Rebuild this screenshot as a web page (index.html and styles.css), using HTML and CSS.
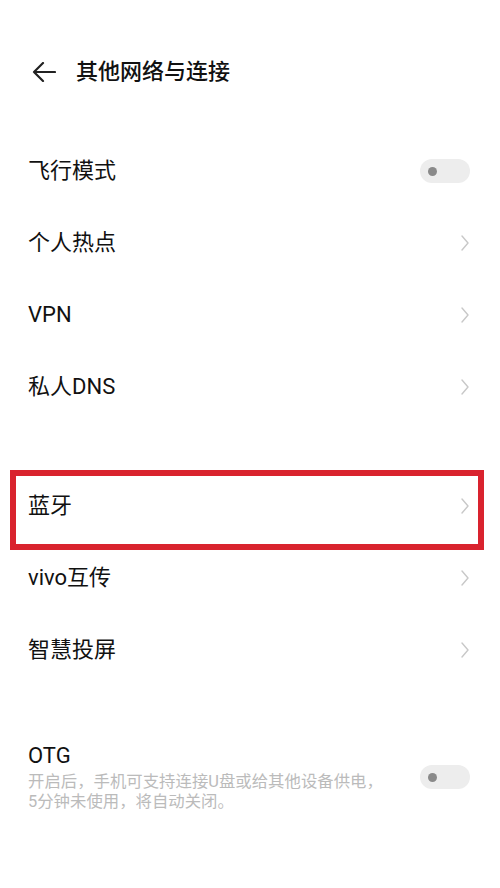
FILE: index.html
```html
<!DOCTYPE html>
<html lang="zh">
<head>
<meta charset="utf-8">
<link rel="stylesheet" href="styles.css">
</head>
<body>
<div class="page">
  <header class="header">
    <svg class="back" width="24" height="20" viewBox="0 0 24 20"><path d="M11 1 L2 10 L11 19 M2 10 H23" fill="none" stroke="#222" stroke-width="2.2" stroke-linecap="round" stroke-linejoin="round"/></svg>
    <span class="title">其他网络与连接</span>
  </header>

  <section class="group">
    <div class="row"><span class="label">飞行模式</span><span class="toggle"><span class="knob"></span></span></div>
    <div class="row"><span class="label">个人热点</span><svg class="chev" width="8" height="16" viewBox="0 0 8 16"><path d="M1 1 L7 8 L1 15" fill="none" stroke="#c8c8c8" stroke-width="1.4" stroke-linecap="round" stroke-linejoin="round"/></svg></div>
    <div class="row"><span class="label">VPN</span><svg class="chev" width="8" height="16" viewBox="0 0 8 16"><path d="M1 1 L7 8 L1 15" fill="none" stroke="#c8c8c8" stroke-width="1.4" stroke-linecap="round" stroke-linejoin="round"/></svg></div>
    <div class="row"><span class="label">私人DNS</span><svg class="chev" width="8" height="16" viewBox="0 0 8 16"><path d="M1 1 L7 8 L1 15" fill="none" stroke="#c8c8c8" stroke-width="1.4" stroke-linecap="round" stroke-linejoin="round"/></svg></div>
  </section>

  <section class="group group2">
    <div class="row"><span class="label">蓝牙</span><svg class="chev" width="8" height="16" viewBox="0 0 8 16"><path d="M1 1 L7 8 L1 15" fill="none" stroke="#c8c8c8" stroke-width="1.4" stroke-linecap="round" stroke-linejoin="round"/></svg><span class="mark"></span></div>
    <div class="row"><span class="label">vivo互传</span><svg class="chev" width="8" height="16" viewBox="0 0 8 16"><path d="M1 1 L7 8 L1 15" fill="none" stroke="#c8c8c8" stroke-width="1.4" stroke-linecap="round" stroke-linejoin="round"/></svg></div>
    <div class="row"><span class="label">智慧投屏</span><svg class="chev" width="8" height="16" viewBox="0 0 8 16"><path d="M1 1 L7 8 L1 15" fill="none" stroke="#c8c8c8" stroke-width="1.4" stroke-linecap="round" stroke-linejoin="round"/></svg></div>
  </section>

  <section class="group group3">
    <div class="row tall">
      <div class="text">
        <div class="label">OTG</div>
        <div class="sub">开启后，手机可支持连接U盘或给其他设备供电，<br>5分钟未使用，将自动关闭。</div>
      </div>
      <span class="toggle"><span class="knob"></span></span>
    </div>
  </section>
</div>
</body>
</html>
```

FILE: styles.css
```css
html, body {
  margin: 0;
  padding: 0;
  background: #ffffff;
}
.page {
  width: 500px;
  height: 888px;
  overflow: hidden;
  font-family: "Roboto", "Noto Sans CJK SC", sans-serif;
  color: #111;
}
.header {
  height: 135px;
  box-sizing: border-box;
  padding: 58px 0 0 32px;
  display: flex;
  align-items: flex-start;
}
.back {
  margin-top: 4px;
  margin-right: 20px;
}
.title {
  font-size: 22px;
  line-height: 28px;
  font-weight: 500;
  color: #111;
}
.group {
  display: flex;
  flex-direction: column;
}
.group2 {
  margin-top: 47px;
}
.group3 {
  margin-top: 56px;
}
.row {
  position: relative;
  height: 72px;
  display: flex;
  align-items: center;
  justify-content: space-between;
  padding: 0 30px 0 28px;
}
.label {
  font-size: 22px;
  line-height: 28px;
  color: #111;
}
.chev {
  margin-right: 1px;
}
.toggle {
  width: 50px;
  height: 24px;
  border-radius: 12px;
  background: #ededed;
  display: flex;
  align-items: center;
  padding-left: 8px;
  box-sizing: border-box;
}
.knob {
  width: 9px;
  height: 9px;
  border-radius: 50%;
  background: #8a8a8a;
}
.mark {
  position: absolute;
  left: 10px;
  top: 0;
  width: 474px;
  height: 80px;
  box-sizing: border-box;
  border: 6px solid #d9232e;
  pointer-events: none;
}
.tall {
  height: auto;
  align-items: center;
}
.sub {
  font-size: 16.4px;
  line-height: 20px;
  color: #bbbbbb;
  margin-top: 2px;
}
```
